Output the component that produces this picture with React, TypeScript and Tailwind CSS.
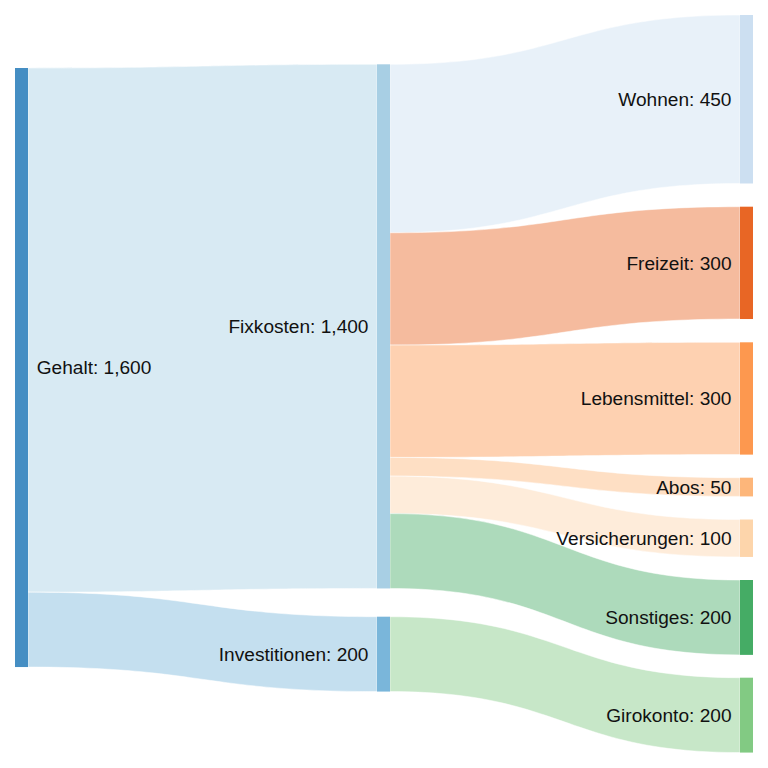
const K = 0.3744;

type Node = {
  name: string;
  value: number;
  x: number;
  y: number;
  color: string;
  label: "left" | "right";
};

const nodes: Record<string, Node> = {
  gehalt: { name: "Gehalt", value: 1600, x: 15, y: 68, color: "#3182bd", label: "right" },
  fix: { name: "Fixkosten", value: 1400, x: 377, y: 64.3, color: "#9ecae1", label: "left" },
  inv: { name: "Investitionen", value: 200, x: 377, y: 616.7, color: "#6baed6", label: "left" },
  wohnen: { name: "Wohnen", value: 450, x: 740, y: 15, color: "#c6dbef", label: "left" },
  freizeit: { name: "Freizeit", value: 300, x: 740, y: 206.7, color: "#e6550d", label: "left" },
  lebens: { name: "Lebensmittel", value: 300, x: 740, y: 342.3, color: "#fd8d3c", label: "left" },
  abos: { name: "Abos", value: 50, x: 740, y: 477.7, color: "#fdae6b", label: "left" },
  vers: { name: "Versicherungen", value: 100, x: 740, y: 519.5, color: "#fdd0a2", label: "left" },
  sonst: { name: "Sonstiges", value: 200, x: 740, y: 580, color: "#31a354", label: "left" },
  giro: { name: "Girokonto", value: 200, x: 740, y: 677.7, color: "#74c476", label: "left" },
};

const links: [string, string, number][] = [
  ["gehalt", "fix", 1400],
  ["gehalt", "inv", 200],
  ["fix", "wohnen", 450],
  ["fix", "freizeit", 300],
  ["fix", "lebens", 300],
  ["fix", "abos", 50],
  ["fix", "vers", 100],
  ["fix", "sonst", 200],
  ["inv", "giro", 200],
];

const NODE_W = 13;

function fmt(n: number) {
  return n.toLocaleString("en-US");
}

function buildLinks() {
  const outOffset: Record<string, number> = {};
  const inOffset: Record<string, number> = {};
  return links.map(([s, t, v]) => {
    const src = nodes[s];
    const tgt = nodes[t];
    const so = outOffset[s] ?? 0;
    const to = inOffset[t] ?? 0;
    const h = v * K;
    outOffset[s] = so + h;
    inOffset[t] = to + h;
    const x0 = src.x + NODE_W;
    const x1 = tgt.x;
    const xm = (x0 + x1) / 2;
    const ys0 = src.y + so;
    const ys1 = ys0 + h;
    const yt0 = tgt.y + to;
    const yt1 = yt0 + h;
    const d = `M${x0},${ys0} C${xm},${ys0} ${xm},${yt0} ${x1},${yt0} L${x1},${yt1} C${xm},${yt1} ${xm},${ys1} ${x0},${ys1} Z`;
    return { key: `${s}-${t}`, d, color: tgt.color };
  });
}

export default function App() {
  const paths = buildLinks();
  return (
    <div className="w-[768px] h-[768px] bg-white overflow-hidden">
      <svg width={768} height={768} viewBox="0 0 768 768" className="block">
        <g>
          {paths.map((p) => (
            <path
              key={p.key}
              d={p.d}
              fill={p.color}
              fillOpacity={0.4}
              stroke="#ffffff"
              strokeWidth={0.5}
            />
          ))}
        </g>
        <g>
          {Object.entries(nodes).map(([id, n]) => (
            <rect
              key={id}
              x={n.x}
              y={n.y}
              width={NODE_W}
              height={n.value * K}
              fill={n.color}
              fillOpacity={0.9}
            />
          ))}
        </g>
        <g
          style={{ fontFamily: '"Liberation Sans", Arial, Helvetica, sans-serif' }}
          fontSize={19.1}
          fill="#111111"
        >
          {Object.entries(nodes).map(([id, n]) => {
            const cy = n.y + (n.value * K) / 2;
            const right = n.label === "right";
            return (
              <text
                key={id}
                x={right ? n.x + NODE_W + 8.7 : n.x - 8.5}
                y={cy}
                dy="0.36em"
                textAnchor={right ? "start" : "end"}
              >
                {`${n.name}: ${fmt(n.value)}`}
              </text>
            );
          })}
        </g>
      </svg>
    </div>
  );
}
